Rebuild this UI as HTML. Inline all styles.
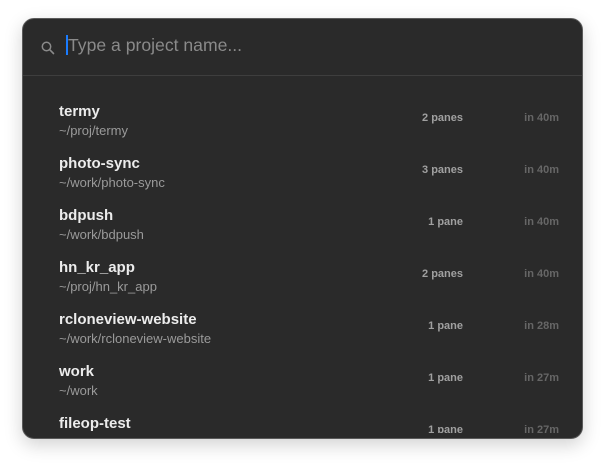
<!DOCTYPE html>
<html><head><meta charset="utf-8"><style>
html,body{margin:0;padding:0;width:606px;height:466px;background:#fff;overflow:hidden;font-family:"Liberation Sans",sans-serif}
.panel{position:absolute;left:22px;top:18px;width:559px;height:419px;background:#2a2a2a;border:1px solid #5a5a5a;border-radius:12px;box-shadow:0 6px 18px rgba(0,0,0,.18);overflow:hidden}
.search{position:absolute;left:0;top:0;width:100%;height:56px;border-bottom:1px solid #3e3e3e}
.search svg{position:absolute;left:18px;top:22px}
.cursor{position:absolute;left:43px;top:16px;width:2px;height:20px;background:#1a7cff}
.ph{position:absolute;left:45px;top:15px;font-size:17.6px;color:#8a8a8a;line-height:22px}
.list{position:absolute;left:0;top:57px;width:100%;height:357px;overflow:hidden}
.row{position:absolute;left:0;width:100%;height:52px}
.name{position:absolute;left:36px;top:0;font-size:15px;font-weight:bold;color:#ececec;line-height:18px}
.path{position:absolute;left:36px;top:20px;font-size:13px;color:#9a9a9a;line-height:15px}
.panes{position:absolute;right:119px;top:9px;font-size:11px;font-weight:bold;color:#a0a0a0}
.time{position:absolute;right:23px;top:9px;font-size:11px;font-weight:bold;color:#666}
</style></head><body>
<div class="panel">
 <div class="search">
  <svg width="14" height="14" viewBox="0 0 14 14"><circle cx="5.5" cy="5.5" r="4.2" fill="none" stroke="#8a8a8a" stroke-width="1.5"/><line x1="8.6" y1="8.6" x2="12.5" y2="12.5" stroke="#8a8a8a" stroke-width="1.6" stroke-linecap="round"/></svg>
  <div class="cursor"></div>
  <div class="ph">Type a project name...</div>
 </div>
 <div class="list">
  <div class="row" style="top:27px"><div class="name">termy</div><div class="path">~/proj/termy</div><div class="panes">2 panes</div><div class="time">in 40m</div></div>
  <div class="row" style="top:79px"><div class="name">photo-sync</div><div class="path">~/work/photo-sync</div><div class="panes">3 panes</div><div class="time">in 40m</div></div>
  <div class="row" style="top:131px"><div class="name">bdpush</div><div class="path">~/work/bdpush</div><div class="panes">1 pane</div><div class="time">in 40m</div></div>
  <div class="row" style="top:183px"><div class="name">hn_kr_app</div><div class="path">~/proj/hn_kr_app</div><div class="panes">2 panes</div><div class="time">in 40m</div></div>
  <div class="row" style="top:235px"><div class="name">rcloneview-website</div><div class="path">~/work/rcloneview-website</div><div class="panes">1 pane</div><div class="time">in 28m</div></div>
  <div class="row" style="top:287px"><div class="name">work</div><div class="path">~/work</div><div class="panes">1 pane</div><div class="time">in 27m</div></div>
  <div class="row" style="top:339px"><div class="name">fileop-test</div><div class="path">~/work/fileop-test</div><div class="panes">1 pane</div><div class="time">in 27m</div></div>
 </div>
</div>
</body></html>
